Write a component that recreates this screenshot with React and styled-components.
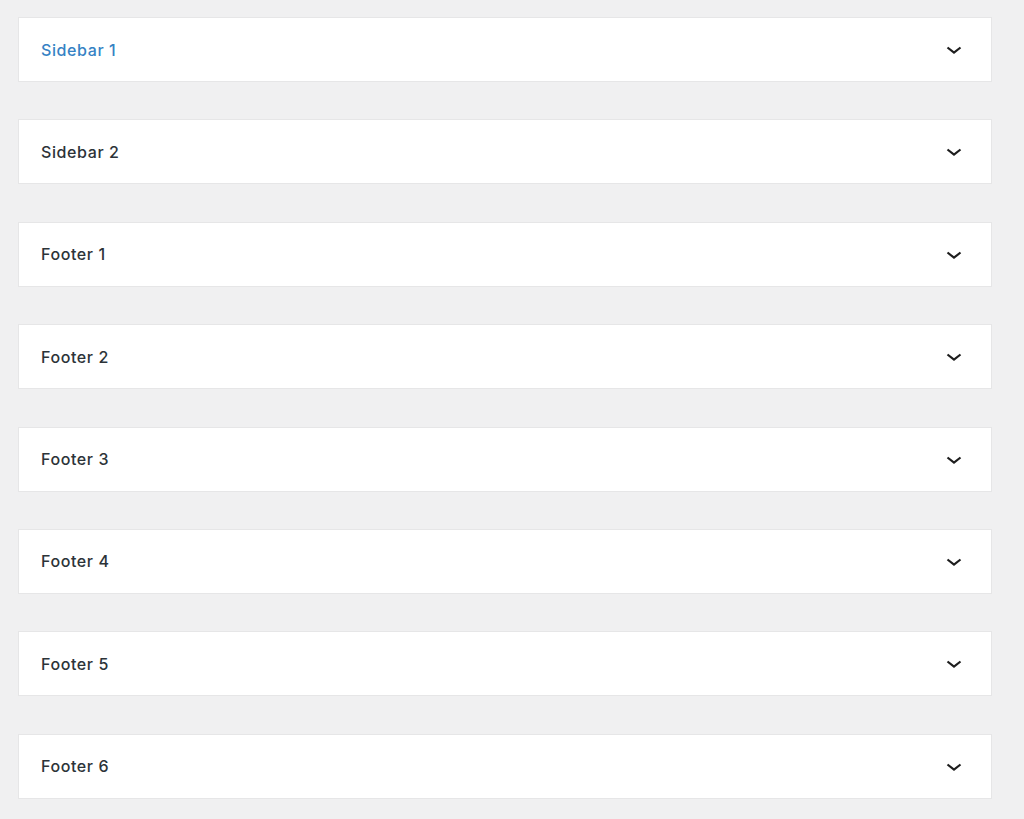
import React from "react";
import styled, { createGlobalStyle } from "styled-components";

const GlobalStyle = createGlobalStyle`
  html, body {
    margin: 0;
    padding: 0;
    background: #f0f0f1;
  }
  body {
    font-family: Inter, "Noto Sans", "Liberation Sans", sans-serif;
  }
`;

const Page = styled.div`
  display: flex;
  flex-direction: column;
  gap: 37.4px;
  padding: 17px 32px 20px 18px;
  min-height: 819px;
  box-sizing: border-box;
`;

const Panel = styled.div`
  display: flex;
  align-items: center;
  justify-content: space-between;
  height: 65px;
  box-sizing: border-box;
  background: #fff;
  border: 1px solid #e6e6e7;
  padding: 0 29px 0 22px;
`;

const Title = styled.span`
  font-size: 16px;
  font-weight: 500;
  letter-spacing: 0.6px;
  color: ${({ $active }) => ($active ? "#3582c4" : "#2c3338")};
`;

const ChevronBox = styled.span`
  display: flex;
  margin-top: 3px;
`;

const Chevron = () => (
  <ChevronBox>
    <svg width="16" height="10" viewBox="0 0 16 10" fill="none">
      <path d="M1.5 1.5 L8 6.7 L14.5 1.5" stroke="#1e1e1e" strokeWidth="2.2" />
    </svg>
  </ChevronBox>
);

const areas = [
  "Sidebar 1",
  "Sidebar 2",
  "Footer 1",
  "Footer 2",
  "Footer 3",
  "Footer 4",
  "Footer 5",
  "Footer 6",
];

export default function App() {
  return (
    <>
      <GlobalStyle />
      <Page>
        {areas.map((name, i) => (
          <Panel key={name}>
            <Title $active={i === 0}>{name}</Title>
            <Chevron />
          </Panel>
        ))}
      </Page>
    </>
  );
}
